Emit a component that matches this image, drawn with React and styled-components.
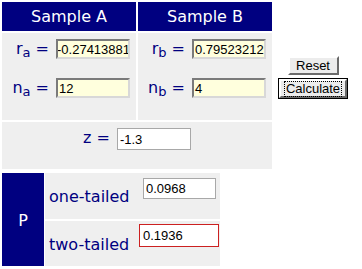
import React from "react";
import styled, { createGlobalStyle } from "styled-components";

const Global = createGlobalStyle`
  html, body { margin: 0; padding: 0; background: #ffffff; }
  body { font-family: "DejaVu Sans", Verdana, sans-serif; }
`;

const NAVY = "#000080";
const GREY = "#efefef";

const Page = styled.div`
  padding: 2px;
  width: 358px;
`;

const Top = styled.div`
  display: flex;
  align-items: flex-start;
`;

const MainTable = styled.div`
  display: grid;
  grid-template-columns: 134px 134px;
  grid-template-rows: 29px 87px 47px;
  gap: 2px;
`;

const Header = styled.div`
  background: ${NAVY};
  color: #ffffff;
  font-size: 16px;
  display: flex;
  align-items: center;
  justify-content: center;
`;

const InputCell = styled.div`
  background: ${GREY};
  display: grid;
  grid-template-rows: 39px 1fr;
  padding: 6px 6px 0 0;
`;

const FieldRow = styled.div`
  display: flex;
  justify-content: flex-end;
  align-items: flex-start;
  gap: 7px;
`;

const Label = styled.span`
  color: ${NAVY};
  font-size: 16px;
  line-height: 20px;
  white-space: nowrap;
`;

const Sub = styled.span`
  font-size: 13px;
  position: relative;
  top: 3px;
`;

const YellowInput = styled.input`
  box-sizing: border-box;
  width: 74px;
  height: 20px;
  padding: 0;
  text-indent: ${(p) => (p.$shift ? -1 : 1)}px;
  border: 2px solid;
  border-color: #7a7a7a #d8d8d8 #d8d8d8 #7a7a7a;
  background: #ffffdd;
  font-family: "Liberation Sans", Arial, sans-serif;
  font-size: 13px;
  color: #000;
  outline: none;
`;

const ZCell = styled.div`
  grid-column: 1 / -1;
  background: ${GREY};
  display: flex;
  justify-content: center;
  align-items: flex-start;
  gap: 7px;
  padding-top: 6px;
`;

const PlainInput = styled.input`
  box-sizing: border-box;
  width: ${(p) => p.$w}px;
  height: ${(p) => p.$h}px;
  padding: 0 0 0 ${(p) => p.$pad}px;
  border: 1px solid ${(p) => (p.$alert ? "#cc2020" : "#a8a8a8")};
  background: #ffffff;
  font-family: "Liberation Sans", Arial, sans-serif;
  font-size: 13px;
  color: #000;
  outline: none;
  margin-top: ${(p) => p.$top}px;
  margin-left: ${(p) => p.$left}px;
`;

const Buttons = styled.div`
  flex: 1;
  display: flex;
  flex-direction: column;
  align-items: center;
  gap: 4px;
  padding-top: 54px;
  padding-right: 6px;
`;

const Button = styled.button`
  box-sizing: border-box;
  width: ${(p) => p.$w}px;
  height: ${(p) => p.$h}px;
  padding: 0;
  background: #ececec;
  font-family: "Liberation Sans", Arial, sans-serif;
  font-size: 13px;
  color: #000;
  border: 2px solid;
  border-color: #ffffff #6a6a6a #6a6a6a #ffffff;
  outline: ${(p) => (p.$default ? "1px solid #000" : "none")};
  display: flex;
  align-items: center;
  justify-content: center;
`;

const Focus = styled.span`
  border: 1px dotted #000;
  padding: 0 1px;
  line-height: 14px;
`;

const PTable = styled.div`
  display: flex;
  margin-top: 4px;
  width: 218px;
`;

const PCell = styled.div`
  width: 43px;
  margin-right: 1px;
  background: ${NAVY};
  color: #fff;
  font-size: 16px;
  display: flex;
  align-items: center;
  justify-content: center;
  padding-top: 2px;
  box-sizing: border-box;
`;

const PRows = styled.div`
  display: grid;
  grid-template-rows: 46px 45px;
  row-gap: 2px;
`;

const PRow = styled.div`
  display: grid;
  grid-template-columns: 93px 82px;
  background: ${GREY};
`;

const PLabel = styled.div`
  color: ${NAVY};
  font-size: 16px;
  display: flex;
  align-items: center;
  padding-left: 4px;
  padding-top: 1px;
`;

const PInputCell = styled.div`
  display: flex;
  align-items: flex-start;
`;

export default function App() {
  return (
    <>
      <Global />
      <Page>
        <Top>
          <MainTable>
            <Header>Sample A</Header>
            <Header>Sample B</Header>
            <InputCell>
              <FieldRow>
                <Label>
                  r<Sub>a</Sub> =
                </Label>
                <YellowInput $shift defaultValue="-0.27413881" />
              </FieldRow>
              <FieldRow>
                <Label>
                  n<Sub>a</Sub> =
                </Label>
                <YellowInput defaultValue="12" />
              </FieldRow>
            </InputCell>
            <InputCell>
              <FieldRow>
                <Label>
                  r<Sub>b</Sub> =
                </Label>
                <YellowInput defaultValue="0.795232125" />
              </FieldRow>
              <FieldRow>
                <Label>
                  n<Sub>b</Sub> =
                </Label>
                <YellowInput defaultValue="4" />
              </FieldRow>
            </InputCell>
            <ZCell>
              <Label>z =</Label>
              <PlainInput $w={74} $h={22} $pad={2} $top={0} $left={0} defaultValue="-1.3" />
            </ZCell>
          </MainTable>
          <Buttons>
            <Button $w={51} $h={19}>Reset</Button>
            <Button $w={68} $h={19} $default>
              <Focus>Calculate</Focus>
            </Button>
          </Buttons>
        </Top>
        <PTable>
          <PCell>P</PCell>
          <PRows>
            <PRow>
              <PLabel>one-tailed</PLabel>
              <PInputCell>
                <PlainInput $w={73} $h={21} $pad={2} $top={5} $left={5} defaultValue="0.0968" />
              </PInputCell>
            </PRow>
            <PRow>
              <PLabel>two-tailed</PLabel>
              <PInputCell>
                <PlainInput $w={80} $h={23} $pad={3} $top={3} $left={1} $alert defaultValue="0.1936" />
              </PInputCell>
            </PRow>
          </PRows>
        </PTable>
      </Page>
    </>
  );
}
